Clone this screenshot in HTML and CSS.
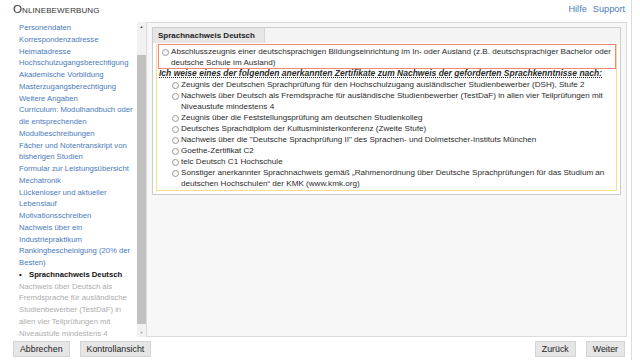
FILE: index.html
```html
<!DOCTYPE html>
<html lang="de">
<head>
    <meta charset="UTF-8">
    <title>Onlinebewerbung</title>
    <link rel="stylesheet" href="styles.css">
</head>
<body>
    <div class="page">
        <header class="top">
            <h1>Onlinebewerbung</h1>
            <nav class="help">
                <a href="#">Hilfe</a>
                <a href="#">Support</a>
            </nav>
        </header>

        <div class="workspace">
            <aside class="sidebar">
                <ul class="steps">
                    <li><a href="#">Personendaten</a></li>
                    <li><a href="#">Korrespondenzadresse</a></li>
                    <li><a href="#">Heimatadresse</a></li>
                    <li><a href="#">Hochschulzugangsberechtigung</a></li>
                    <li><a href="#">Akademische Vorbildung</a></li>
                    <li><a href="#">Masterzugangsberechtigung</a></li>
                    <li><a href="#">Weitere Angaben</a></li>
                    <li><a href="#">Curriculum: Modulhandbuch oder die entsprechenden Modulbeschreibungen</a></li>
                    <li><a href="#">Fächer und Notentranskript von bisherigen Studien</a></li>
                    <li><a href="#">Formular zur Leistungsübersicht Mechatronik</a></li>
                    <li><a href="#">Lückenloser und aktueller Lebenslauf</a></li>
                    <li><a href="#">Motivationsschreiben</a></li>
                    <li><a href="#">Nachweis über ein Industriepraktikum</a></li>
                    <li><a href="#">Rankingbescheinigung (20% der Besten)</a></li>
                    <li class="current">Sprachnachweis Deutsch</li>
                    <li class="disabled">Nachweis über Deutsch als Fremdsprache für ausländische Studienbewerber (TestDaF) in allen vier Teilprüfungen mit Niveaustufe mindestens 4</li>
                </ul>
                <div class="scrollbar">
                    <span class="arrow">&#9650;</span>
                    <div class="track"><div class="thumb"></div></div>
                    <span class="arrow">&#9660;</span>
                </div>
            </aside>

            <main class="panel">
                <section class="box">
                    <div class="box-head">
                        <span class="tab">Sprachnachweis Deutsch</span>
                    </div>
                    <div class="box-body">
                        <label class="option main-option">
                            <span class="radio"></span>
                            <span>Abschlusszeugnis einer deutschsprachigen Bildungseinrichtung im In- oder Ausland (z.B. deutschsprachiger Bachelor oder deutsche Schule im Ausland)</span>
                        </label>
                        <p class="hint">Ich weise eines der folgenden anerkannten Zertifikate zum Nachweis der geforderten Sprachkenntnisse nach:</p>
                        <div class="options">
                            <label class="option"><span class="radio"></span><span>Zeugnis der Deutschen Sprachprüfung für den Hochschulzugang ausländischer Studienbewerber (DSH), Stufe 2</span></label>
                            <label class="option"><span class="radio"></span><span>Nachweis über Deutsch als Fremdsprache für ausländische Studienbewerber (TestDaF) in allen vier Teilprüfungen mit Niveaustufe mindestens 4</span></label>
                            <label class="option"><span class="radio"></span><span>Zeugnis über die Feststellungsprüfung am deutschen Studienkolleg</span></label>
                            <label class="option"><span class="radio"></span><span>Deutsches Sprachdiplom der Kultusministerkonferenz (Zweite Stufe)</span></label>
                            <label class="option"><span class="radio"></span><span>Nachweis über die "Deutsche Sprachprüfung II" des Sprachen- und Dolmetscher-Instituts München</span></label>
                            <label class="option"><span class="radio"></span><span>Goethe-Zertifikat C2</span></label>
                            <label class="option"><span class="radio"></span><span>telc Deutsch C1 Hochschule</span></label>
                            <label class="option"><span class="radio"></span><span>Sonstiger anerkannter Sprachnachweis gemäß „Rahmenordnung über Deutsche Sprachprüfungen für das Studium an deutschen Hochschulen“ der KMK (www.kmk.org)</span></label>
                        </div>
                    </div>
                </section>
            </main>
        </div>

        <footer class="actions">
            <button>Abbrechen</button>
            <button>Kontrollansicht</button>
            <span class="spacer"></span>
            <button>Zurück</button>
            <button>Weiter</button>
        </footer>
    </div>
</body>
</html>
```

FILE: styles.css
```css
:root {
    --link: #4a7bbd;
    --text: #2b2b2b;
    --muted: #adadad;
    --line: #dcdcdc;
}

body {
    margin: 0;
    font-family: 'Liberation Sans', Arial, sans-serif;
    color: var(--text);
    background: #fff;
}

.page {
    width: 631px;
    height: 360px;
    border-right: 1px solid var(--line);
    display: flex;
    flex-direction: column;
    overflow: hidden;
}

/* Kopfzeile */
.top {
    height: 22px;
    display: flex;
    align-items: center;
    justify-content: space-between;
    padding: 0 6px 0 13px;
}

.top h1 {
    margin: 0;
    font-size: 11.6px;
    font-weight: normal;
    font-variant: small-caps;
    letter-spacing: 0.1px;
    color: #333;
    margin-top: -5px;
}

.help {
    display: flex;
    gap: 6px;
    margin-top: -5px;
}

.help a {
    color: var(--link);
    text-decoration: none;
    font-size: 9.2px;
}

/* Hauptbereich */
.workspace {
    height: 315px;
    display: flex;
}

.sidebar {
    width: 146px;
    display: flex;
    flex-shrink: 0;
}

.steps {
    list-style: none;
    margin: 0;
    padding: 0 0 0 19px;
    width: 118px;
    overflow: hidden;
    font-size: 7.7px;
    line-height: 11.75px;
}

.steps a {
    color: var(--link);
    text-decoration: none;
}

.steps .current {
    font-weight: bold;
    color: #111;
    margin-left: -1px;
    padding-left: 11px;
    position: relative;
}

.steps .current::before {
    content: "•";
    position: absolute;
    left: 1px;
}

.steps .disabled {
    color: var(--muted);
}

.scrollbar {
    width: 9px;
    background: #f1f1f1;
    display: flex;
    flex-direction: column;
    align-items: center;
}

.scrollbar .arrow {
    font-size: 4px;
    line-height: 9px;
    color: #505050;
}

.scrollbar .arrow:last-child {
    color: #a3a3a3;
}

.track {
    flex: 1;
    width: 100%;
    padding: 24px 0 4px;
    display: flex;
}

.thumb {
    flex: 1;
    background: #c1c1c1;
}

.panel {
    flex: 1;
    margin-right: 4px;
    border: 1px solid var(--line);
    background: #f7f7f7;
    padding: 4px 5px;
}

.box {
    border: 1px solid #cdcdcd;
    background: #fff;
}

.box-head {
    height: 15px;
    background: #f4f4f4;
    display: flex;
}

.tab {
    width: 106px;
    padding-left: 5px;
    background: #e6e6e6;
    border-right: 1px solid #d6d6d6;
    font-size: 8px;
    font-weight: bold;
    line-height: 15px;
    color: #222;
}

.box-body {
    margin: 0 3px 3px;
    border: 1px solid #f8de8a;
    border-top: none;
    padding-bottom: 1px;
    font-size: 8.1px;
    line-height: 11px;
}

.option {
    display: flex;
    gap: 2px;
}

.radio {
    width: 5px;
    height: 5px;
    margin-top: 3px;
    border: 1px solid #9a9a9a;
    border-radius: 50%;
    background: #fafafa;
    flex-shrink: 0;
}

.main-option {
    margin: 1px 0 0 1px;
    border: 1px solid #f0877a;
    padding: 1px 2px 0 3px;
}

.hint {
    margin: -1px 0 0 2px;
    font-size: 8.5px;
    font-weight: bold;
    font-style: italic;
    text-decoration: underline dotted;
}

.options {
    padding-left: 15px;
}

/* Fußleiste */
.actions {
    flex: 1;
    display: flex;
    align-items: center;
    gap: 10px;
    padding: 0 6px 0 13px;
}

.actions .spacer {
    flex: 1;
}

.actions button {
    flex-shrink: 0;
    white-space: nowrap;
    font-family: inherit;
    font-size: 8.8px;
    line-height: 14px;
    padding: 0 6px;
    background: #e6e6e6;
    border: 1px solid #d4d4d4;
    color: #222;
}
```
